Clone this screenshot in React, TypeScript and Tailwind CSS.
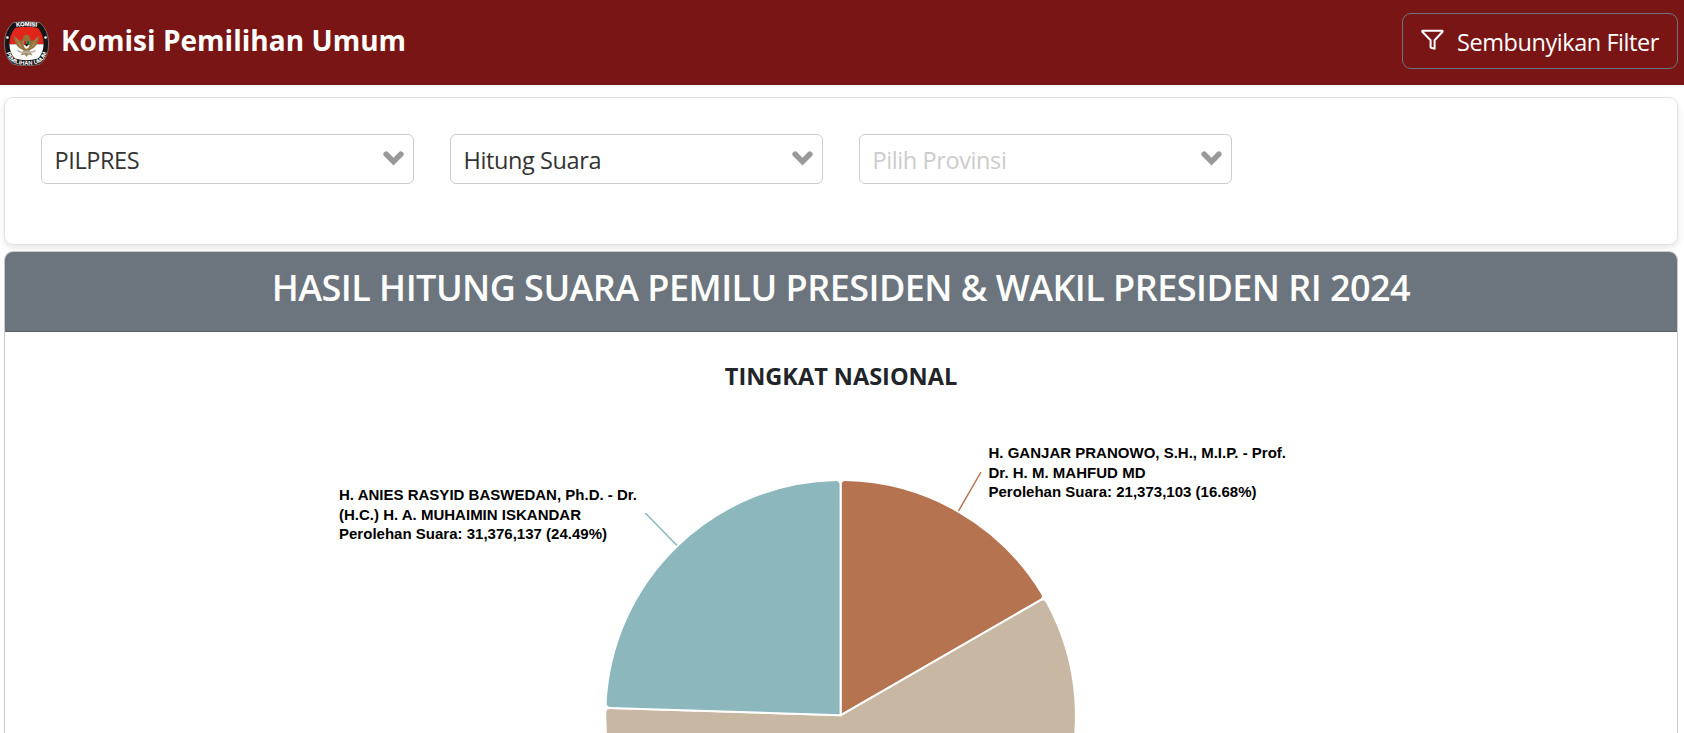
const CX = 840.6;
const CY = 365.3;
const R = 235.3;

function point(deg: number, r: number) {
  const a = (deg * Math.PI) / 180;
  return `${(CX + r * Math.sin(a)).toFixed(2)} ${(CY - r * Math.cos(a)).toFixed(2)}`;
}

function slice(from: number, to: number) {
  const corner = 5;
  const da = (corner / R) * (180 / Math.PI);
  const large = to - from > 180 ? 1 : 0;
  return [
    `M${CX} ${CY}`,
    `L${point(from, R - corner)}`,
    `Q${point(from, R)} ${point(from + da, R)}`,
    `A${R} ${R} 0 ${large} 1 ${point(to - da, R)}`,
    `Q${point(to, R)} ${point(to, R - corner)}`,
    "Z",
  ].join(" ");
}

const slices = [
  { color: "#b57350", from: 0, to: 60.05 },
  { color: "#c8b7a3", from: 60.05, to: 271.84 },
  { color: "#8cb7bd", from: 271.84, to: 360 },
];

const labels = [
  { x: 339, y: 150, width: 298, text: "H. ANIES RASYID BASWEDAN, Ph.D. - Dr." },
  { x: 339, y: 170, width: 242, text: "(H.C.) H. A. MUHAIMIN ISKANDAR" },
  { x: 339, y: 189, width: 268, text: "Perolehan Suara: 31,376,137 (24.49%)" },
  { x: 988.5, y: 108, width: 297.5, text: "H. GANJAR PRANOWO, S.H., M.I.P. - Prof." },
  { x: 988.5, y: 128, width: 157, text: "Dr. H. M. MAHFUD MD" },
  { x: 988.5, y: 147, width: 268, text: "Perolehan Suara: 21,373,103 (16.68%)" },
];

function Logo() {
  return (
    <svg className="h-[45px] w-[45px] shrink-0" viewBox="0 0 45 45">
      <defs>
        <path id="arc-top" d="M7 6.800Q22.500 3.400 38 6.800" />
        <path id="arc-bottom" d="M1.500 25Q2.500 39.500 11 42.300Q22.500 45.600 34 42.300Q42.500 39.500 43.500 25" />
        <clipPath id="shield">
          <path d="M11 7Q22.500 4.600 34 7Q39.600 14 39.600 23Q39.400 32 34 37.600Q22.500 41 11 37.600Q5.600 32 5.400 23Q5.400 14 11 7Z" />
        </clipPath>
      </defs>
      <path
        d="M9 1.700Q22.500-1 36 1.700Q44.500 9 44.600 23Q44.500 36 36.500 43Q22.500 46.500 8.500 43Q.5 36 .4 23Q.5 9 9 1.700Z"
        fill="#161414"
        stroke="#8f8f8f"
        strokeWidth=".7"
      />
      <g clipPath="url(#shield)">
        <rect width="45" height="23.300" fill="#e1251b" />
        <rect y="23.300" width="45" height="22" fill="#fff" />
      </g>
      <g fill="#94703a">
        <path d="M10 14.500C13 18 16 20 18.500 20.500L20 29L17 28C12.500 25.500 9.800 20.500 10 14.500Z" />
        <path d="M35 14.500C32 18 29 20 26.500 20.500L25 29L28 28C32.500 25.500 35.200 20.500 35 14.500Z" />
        <path d="M19 17Q19.500 13.200 23.500 13.800Q26.400 15 26 18L28 21V27L25 30H20L17 27V21Z" />
        <path d="M20 29L16.500 34.500L20.500 33.500L22.500 36L24.500 33.500L28.500 34.500L25 29Z" fill="#a08d66" />
      </g>
      <path d="M12 17L17 25M33 17L28 25M14 22L18 27M31 22L27 27" stroke="#d2b178" strokeWidth=".4" />
      <path d="M13.500 29.500Q18 32.500 22.500 31Q27 32.500 31.500 29.500" fill="none" stroke="#b8b3a9" strokeWidth="1.600" />
      <path d="M19.500 20H25.700V24Q25 27 22.600 28Q20 27 19.500 24Z" fill="#f3eee5" />
      <path d="M19.500 20H22.600V24H19.500Z" fill="#c9271f" />
      <path d="M22.600 20H25.700V24H22.600Z" fill="#17713c" />
      <circle cx="22.600" cy="24" r="1.200" fill="#111" />
      <circle cx="3.400" cy="16.500" r="1.300" fill="#fff" />
      <circle cx="41.600" cy="16.500" r="1.300" fill="#fff" />
      <g fill="#fff" fontFamily="'Liberation Sans', sans-serif" fontWeight="700">
        <text fontSize="5.800" stroke="#fff" strokeWidth=".2">
          <textPath href="#arc-top" startOffset="50%" textAnchor="middle">KOMISI</textPath>
        </text>
        <text fontSize="5.800">
          <textPath href="#arc-bottom" startOffset="50%" textAnchor="middle">PEMILIHAN UMUM</textPath>
        </text>
      </g>
    </svg>
  );
}

function Select({ value, placeholder = false }: { value: string; placeholder?: boolean }) {
  return (
    <div className="flex h-[50px] w-[373px] items-center justify-between rounded-[6px] border border-[#cccccc] pr-[9px] pl-[12.500px]">
      <span
        className={
          placeholder
            ? "pt-[3px] text-[23.500px] leading-none tracking-[-0.4px] text-[#cccccc]"
            : "pt-[3px] text-[23.500px] leading-none tracking-[-0.4px] text-[#333333]"
        }
      >
        {value}
      </span>
      <svg className="-mt-[2px] h-[15px] w-[21px]" viewBox="0 0 21 15">
        <path
          d="M.8 4.700Q-.5 3 1 1.500Q3-.6 4.700.8L10.500 6.700L16.300.8Q18-.6 20 1.500Q21.500 3 20.200 4.700L10.500 14.600Z"
          fill="#999999"
        />
      </svg>
    </div>
  );
}

export default function App() {
  return (
    <div className="h-[733px] overflow-hidden bg-white font-['Open_Sans',sans-serif] text-[#212529]">
      <header className="flex h-[85px] items-center justify-between bg-[#791515] pr-[6px] pl-[4px] text-white">
        <div className="flex items-center gap-[12px]">
          <div className="pt-[2px]">
            <Logo />
          </div>
          <h1 className="-mt-[6px] text-[28px] leading-none font-bold tracking-[0.03px]">Komisi Pemilihan Umum</h1>
        </div>
        <button className="mt-[-3px] flex h-[56px] w-[276px] items-center rounded-[9px] border border-[#6c757d] pl-[18px]">
          <svg className="-mt-[2px] h-[22px] w-[23px] shrink-0" viewBox="0 0 23 22">
            <path
              d="M1.300 1.700H21.500V2.700L13.600 11.300V19.800L9.600 18.600V11.300L1.300 2.700Z"
              fill="none"
              stroke="#fff"
              strokeWidth="2"
              strokeLinejoin="round"
            />
          </svg>
          <span className="ml-[13px] pt-[4px] text-[23.500px] leading-none tracking-[-0.44px] whitespace-nowrap">
            Sembunyikan Filter
          </span>
        </button>
      </header>

      <main className="flex flex-col gap-[6px] pt-[12px] pr-[6px] pl-[4px]">
        <section className="flex h-[148px] gap-[36px] rounded-[9px] border border-[#dfe1e5] px-[36px] pt-[36px] shadow-[0_3px_6px_rgba(0,0,0,0.1)]">
          <Select value="PILPRES" />
          <Select value="Hitung Suara" />
          <Select value="Pilih Provinsi" placeholder />
        </section>

        <section className="h-[600px] overflow-hidden rounded-[9px] border border-[#c9cbcd] bg-white">
          <div className="flex h-[80px] justify-center border-b border-[#585f66] bg-[#6c757d] pt-[18px]">
            <h2 className="text-[36px] leading-[36px] font-semibold tracking-[-0.54px] whitespace-nowrap text-white">
              HASIL HITUNG SUARA PEMILU PRESIDEN &amp; WAKIL PRESIDEN RI 2024
            </h2>
          </div>
          <h3 className="pt-[31px] text-center text-[23.500px] leading-[26px] font-bold">TINGKAT NASIONAL</h3>
          <svg className="pointer-events-none -mt-[39px] -ml-[5px] block h-[383px] w-[1684px]" viewBox="0 0 1684 383">
            {slices.map((s) => (
              <path key={s.color} d={slice(s.from, s.to)} fill={s.color} stroke="#fff" strokeWidth="2" />
            ))}
            <path d="M645.300 163L677 195.500" stroke="#8cb7bd" strokeWidth="1.500" />
            <path d="M981 122L958.500 161" stroke="#b57350" strokeWidth="1.500" />
            <g fill="#000" fontFamily="'Liberation Sans', Arial, sans-serif" fontSize="15" fontWeight="700">
              {labels.map((l) => (
                <text key={l.text} x={l.x} y={l.y} textLength={l.width}>
                  {l.text}
                </text>
              ))}
            </g>
          </svg>
        </section>
      </main>
    </div>
  );
}
